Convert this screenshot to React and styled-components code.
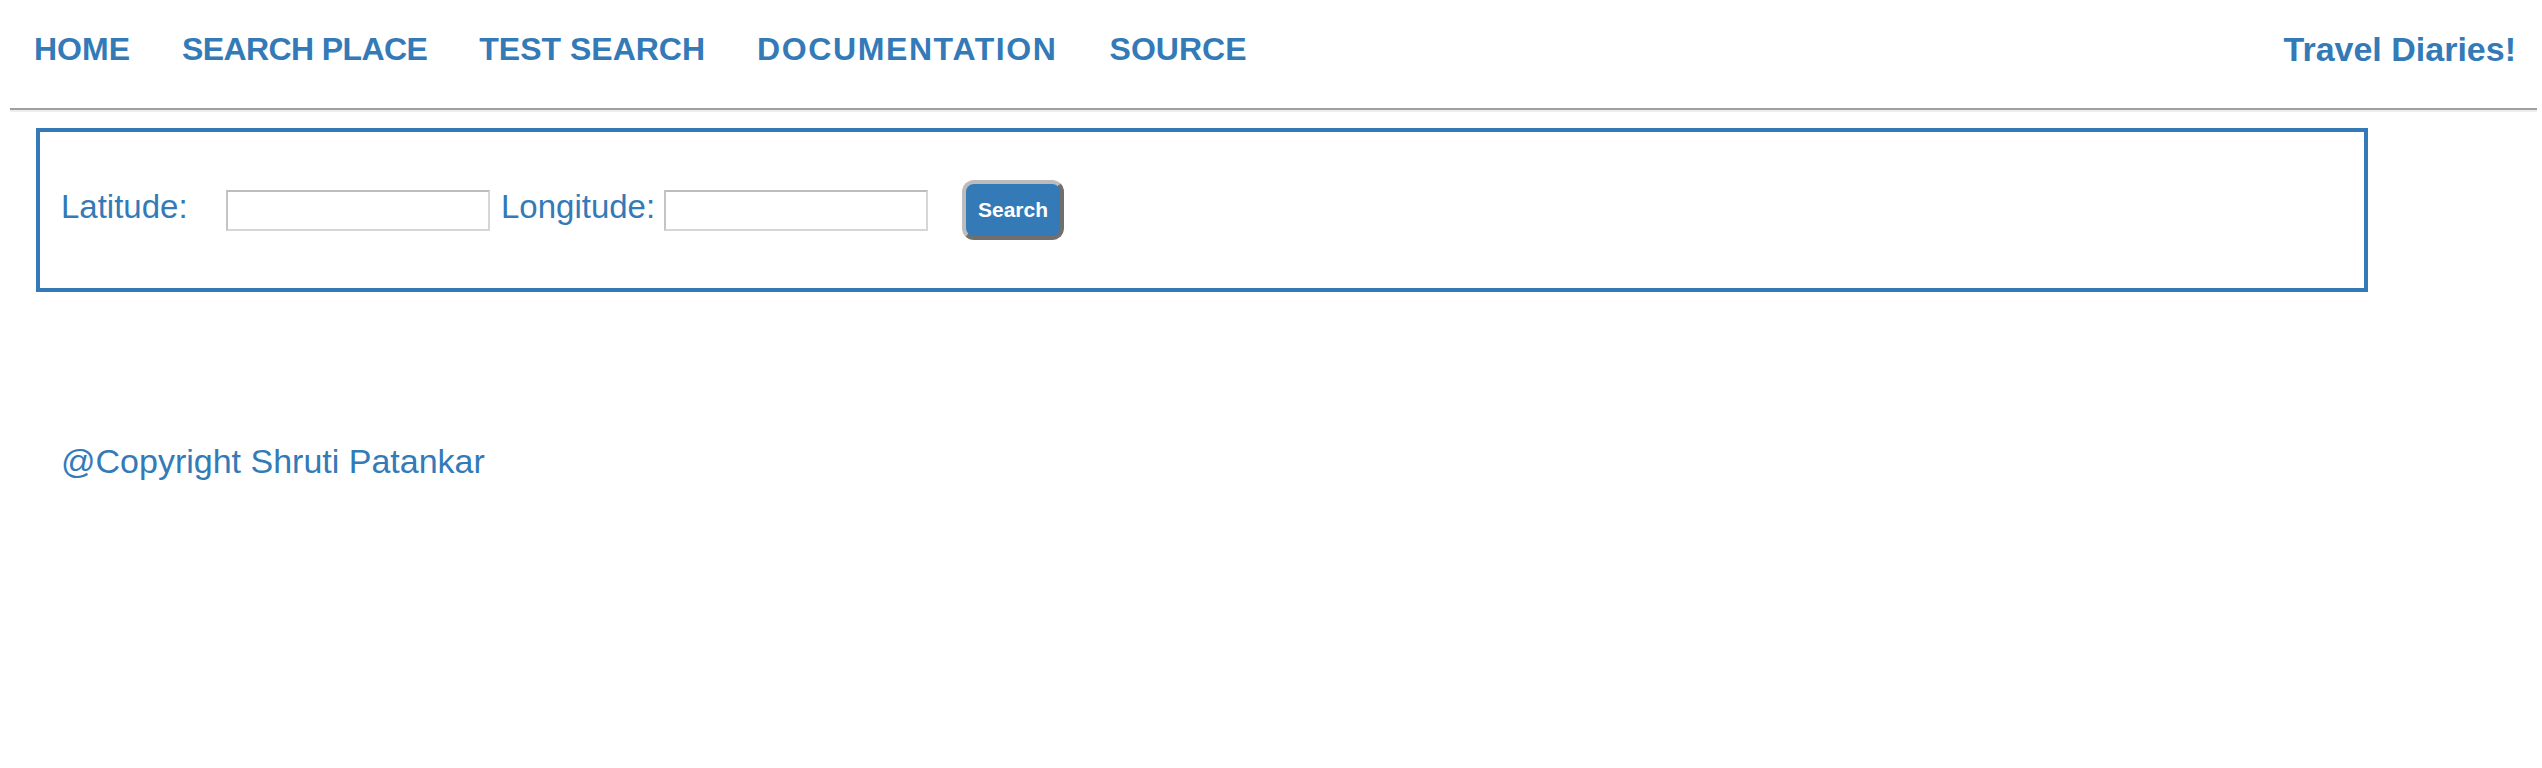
import styled, { createGlobalStyle } from 'styled-components';

const GlobalStyle = createGlobalStyle`
  body {
    margin: 0;
    background: #fff;
    font-family: "Liberation Sans", Arial, sans-serif;
    color: #337ab7;
  }
`;

const Navbar = styled.nav`
  display: flex;
  align-items: center;
  padding: 31px 26px 40px 34px;
  gap: 52px;
`;

const NavLink = styled.a`
  font-size: ${(p) => (p.$right ? '34px' : '32px')};
  font-weight: bold;
  line-height: 37px;
  color: #337ab7;
  text-decoration: none;
  white-space: nowrap;
  letter-spacing: ${(p) => p.$spacing || 0}px;
  margin-left: ${(p) => (p.$right ? 'auto' : '0')};
`;

const Divider = styled.hr`
  margin: 0 5px 0 10px;
  height: 2px;
  border: none;
  background: #a0a0a0;
  border-bottom: 2px solid #eeeeee;
  box-sizing: content-box;
`;

const SearchBox = styled.form`
  box-sizing: border-box;
  width: 2332px;
  height: 164px;
  margin: 16px 0 0 36px;
  border: 4px solid #337ab7;
  display: flex;
  align-items: center;
  padding-left: 21px;
`;

const Label = styled.label`
  width: ${(p) => p.$width}px;
  font-size: 33px;
  line-height: 38px;
  color: #337ab7;
  padding-bottom: 6px;
  white-space: nowrap;
`;

const Input = styled.input`
  box-sizing: border-box;
  width: 264px;
  height: 41px;
  margin: 0 11px 0 0;
  padding: 2px 4px;
  border: 2px solid #d6d6d6;
  border-top-color: #bdbdbd;
  border-left-color: #c4c4c4;
  background: #fff;
  font-size: 26px;
  outline: none;
`;

const Button = styled.button`
  box-sizing: border-box;
  width: 102px;
  height: 60px;
  margin-left: 23px;
  background: #337ab7;
  color: #fff;
  font-family: "Liberation Sans", Arial, sans-serif;
  font-size: 21px;
  font-weight: bold;
  border: 4px solid;
  border-color: #bcbcbc #6f6f6f #6f6f6f #bcbcbc;
  border-radius: 12px;
  padding: 0;
  cursor: pointer;
`;

const Footer = styled.p`
  margin: 150px 0 0 61px;
  font-size: 34px;
  line-height: 38px;
  color: #337ab7;
`;

export default function App() {
  return (
    <>
      <GlobalStyle />
      <Navbar>
        <NavLink href="#">HOME</NavLink>
        <NavLink href="#" $spacing={-0.6}>SEARCH PLACE</NavLink>
        <NavLink href="#">TEST SEARCH</NavLink>
        <NavLink href="#" $spacing={1.6}>DOCUMENTATION</NavLink>
        <NavLink href="#">SOURCE</NavLink>
        <NavLink href="#" $right>Travel Diaries!</NavLink>
      </Navbar>
      <Divider />
      <SearchBox onSubmit={(e) => e.preventDefault()}>
        <Label $width={165}>Latitude:</Label>
        <Input type="text" />
        <Label $width={163}>Longitude:</Label>
        <Input type="text" />
        <Button type="submit">Search</Button>
      </SearchBox>
      <Footer>@Copyright Shruti Patankar</Footer>
    </>
  );
}
